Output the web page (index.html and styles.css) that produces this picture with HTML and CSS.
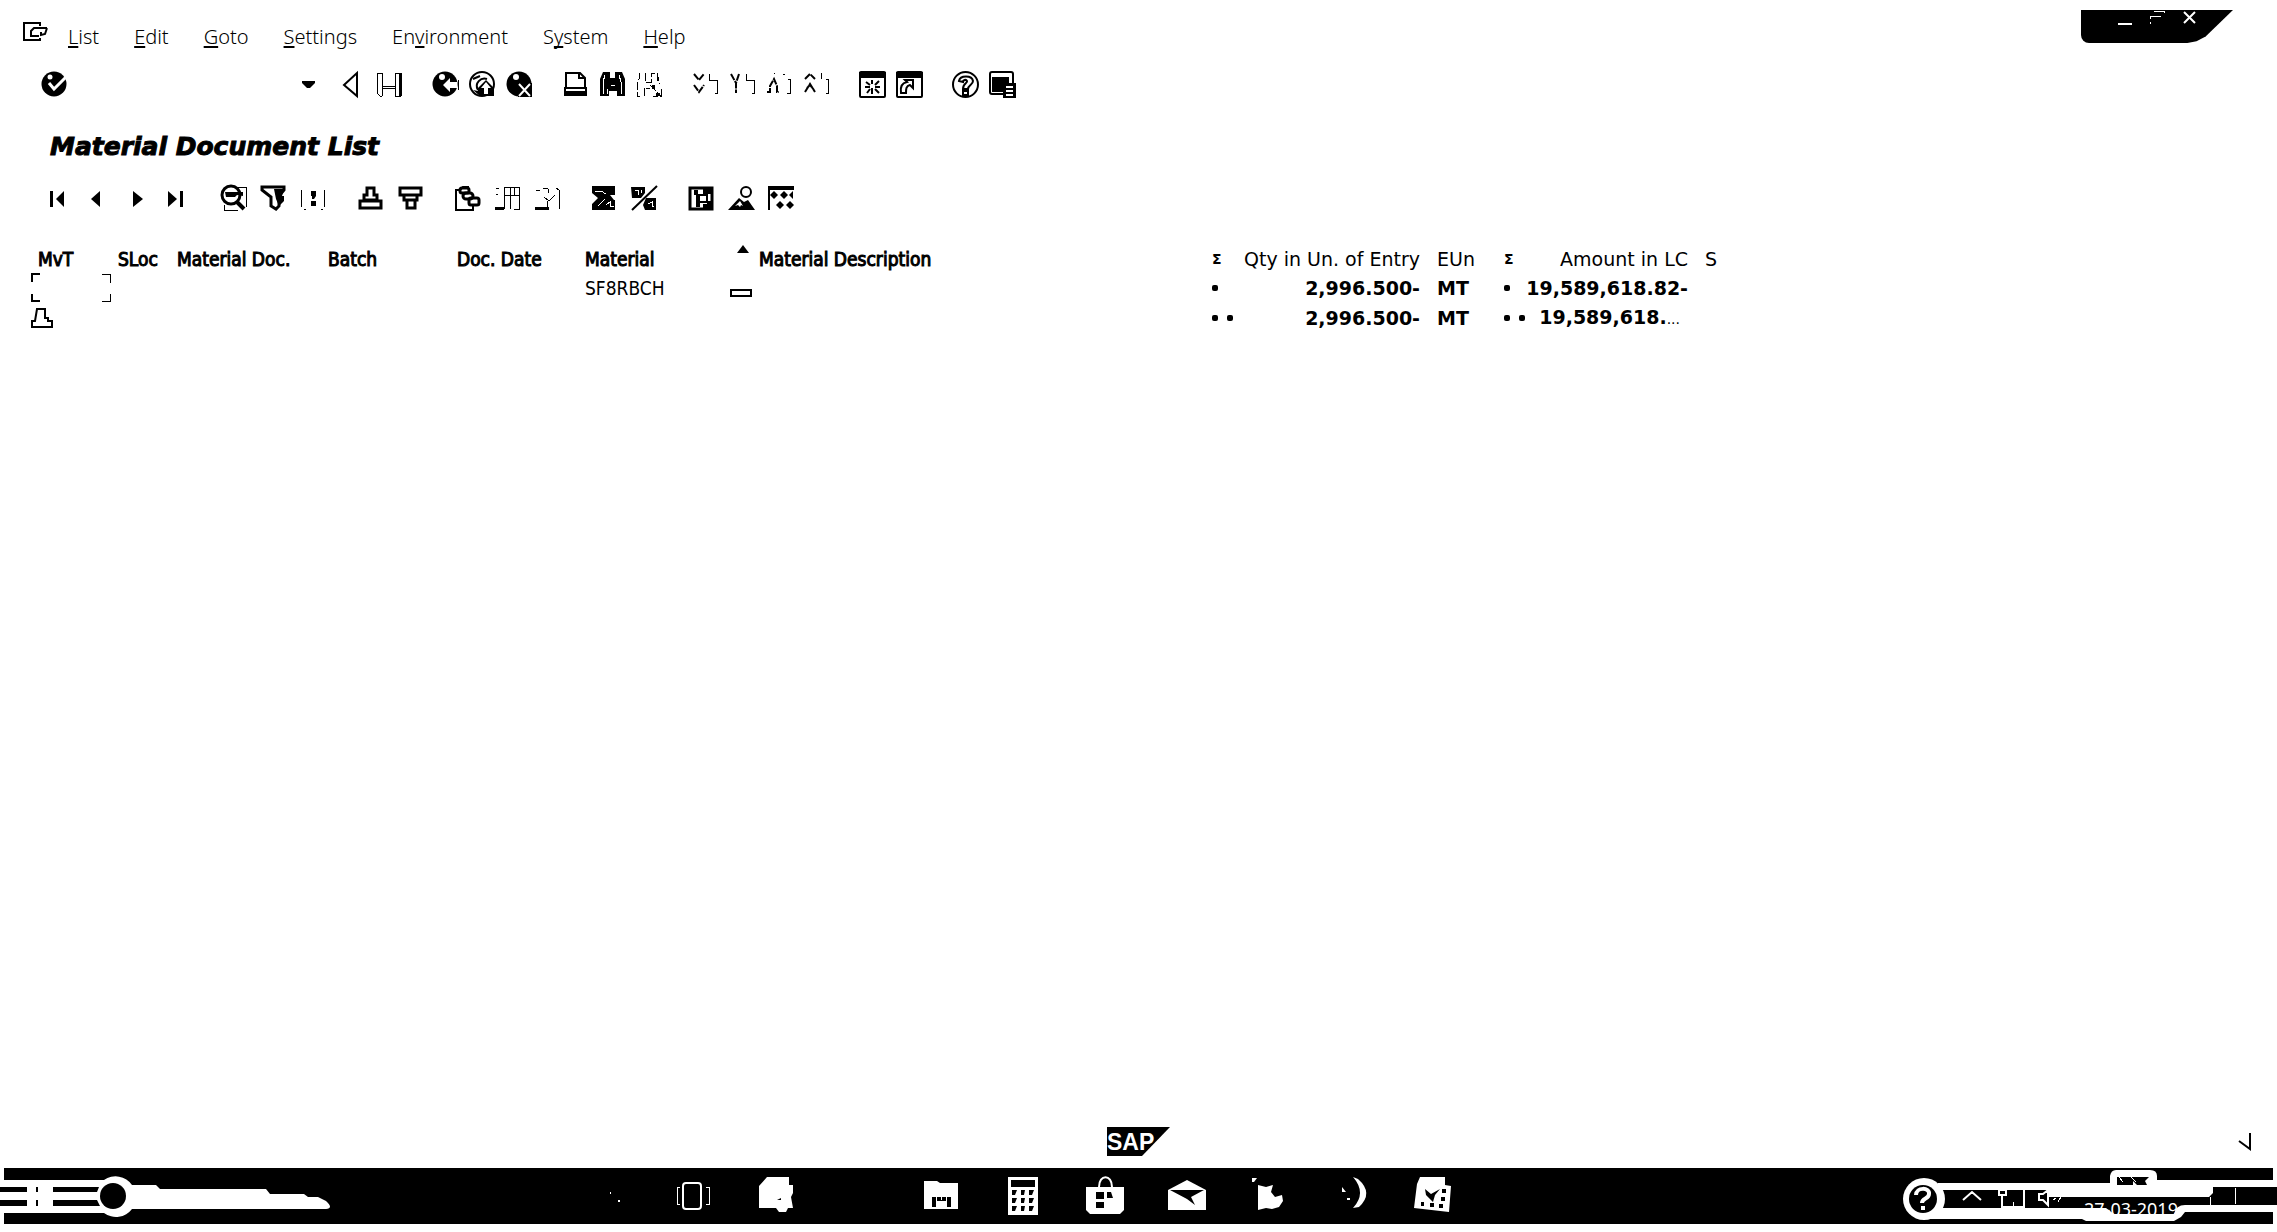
FILE: index.html
```html
<!DOCTYPE html>
<html lang="en">
<head>
<meta charset="utf-8">
<title>Material Document List</title>
<link rel="stylesheet" href="styles.css">
</head>
<body>
<header class="top">
  <nav class="menu">
    <button class="icon" aria-label="Session"><svg viewBox="0 0 27 27"><path class="l" d="M20 7V4H4v17h16v-2M27 9H14l-3 3v5h8M27 9l-2 6-4 1v-3"/></svg></button>
    <a href="#"><u>L</u>ist</a>
    <a href="#"><u>E</u>dit</a>
    <a href="#"><u>G</u>oto</a>
    <a href="#"><u>S</u>ettings</a>
    <a href="#">En<u>v</u>ironment</a>
    <a href="#">S<u>y</u>stem</a>
    <a href="#"><u>H</u>elp</a>
  </nav>
  <div class="window-controls">
    <button aria-label="Minimize"><svg viewBox="0 0 16 16"><path class="w" d="M1 14h14"/></svg></button>
    <button aria-label="Restore"><svg viewBox="0 0 16 16"><path class="w thin" d="M1 14v-2M1 9V6h11M5 1h10v2"/></svg></button>
    <button aria-label="Close"><svg viewBox="0 0 16 16"><path class="w" d="M3 2l11 11M14 2L3 13"/></svg></button>
  </div>
</header>

<div class="toolbar system-bar">
  <div class="command">
    <button class="icon" aria-label="Enter"><svg viewBox="0 0 27 27"><circle cx="13" cy="13" r="12.5"/><circle class="wf" cx="9" cy="6" r="2.5"/><path class="w w3" d="M8 12l5 6L25 6"/></svg></button>
    <input type="text" aria-label="Command">
    <button class="icon" aria-label="Command history"><svg viewBox="0 0 27 27"><path d="M7 10h13v2l-5 5h-3l-5-5z"/></svg></button>
  </div>
  <div class="groups">
    <div class="group">
      <button class="icon" aria-label="Hide command field"><svg viewBox="0 0 27 27"><path class="l" d="M18 2v23L5 14z"/></svg></button>
      <button class="icon" aria-label="Save"><svg viewBox="0 0 27 27"><path class="l thin" d="M6 2H1v20l3 3h2M6 2v23M6 15h13M6 17h13M19 2v23M19 2h5v23h-5"/><path d="M23 2h3v23h-3z"/></svg></button>
    </div>
    <div class="group">
      <button class="icon" aria-label="Back"><svg viewBox="0 0 27 27"><circle cx="13" cy="13" r="12.5"/><circle class="wf" cx="10" cy="6" r="3"/><path class="wf" d="M11 14l7-7v4h7v6h-7v4z"/><path class="l thin" d="M26 9v10"/></svg></button>
      <button class="icon" aria-label="Exit"><svg viewBox="0 0 27 27"><circle class="l" cx="13" cy="13" r="12"/><path class="l" d="M9 19c-4-7 3-13 9-11M4 8l7-3"/><path d="M4 19l5 1v-3l8-8 8 8v8H11z"/><path class="wf" d="M17 11l5 6h-3v6h-4v-6h-3z"/></svg></button>
      <button class="icon" aria-label="Cancel"><svg viewBox="0 0 27 27"><circle cx="13" cy="13" r="12.500"/><path d="M12 12h14v14H12z"/><circle class="wf" cx="10" cy="6" r="3"/><path class="w" d="M13 13l11 12M24 13L13 25"/></svg></button>
    </div>
    <div class="group">
      <button class="icon" aria-label="Print"><svg viewBox="0 0 27 27"><path class="l" d="M4 16V2h14l5 5v9M17 2v5h5M3 17h21v5H3z"/><path d="M2 20h23v5H2z"/></svg></button>
      <button class="icon" aria-label="Find"><svg viewBox="0 0 27 27"><path d="M1 25V8l3-7h7v6h5V1h7l3 7v17h-8v-5h-8v5z"/><path class="w thin" d="M4 23V11l2-7M8 23v-5M22 23V11l-2-7M12 14h4"/></svg></button>
      <button class="icon" aria-label="Find next"><svg viewBox="0 0 27 27"><path class="l thin" d="M3 2v6L1 10v15h3M9 2v9h6V2h6v7l3 4M8 25v-8h6M14 14l11 11M25 18v7h-8M21 2l2 8" stroke-dasharray="8 2"/><path d="M16 14h3v4h-3zM20 22h4v3h-4z"/></svg></button>
    </div>
    <div class="group">
      <button class="icon" aria-label="First page"><svg viewBox="0 0 27 27"><path class="l" d="M2 3l5 6 5-6M2 14l5 7 5-7" stroke-dasharray="7 1"/><path class="l thin" d="M17 3v6h8v13h-2"/></svg></button>
      <button class="icon" aria-label="Previous page"><svg viewBox="0 0 27 27"><path class="l" d="M2 3l5 9M10 3l-3 9v10" stroke-dasharray="7 1"/><path class="l thin" d="M17 3v6h8v13h-2"/></svg></button>
      <button class="icon" aria-label="Next page"><svg viewBox="0 0 27 27"><path class="l" d="M1 21h3v-6l4-7 3 7v6h2" stroke-dasharray="7 1"/><path class="l thin" d="M8 2h1M17 3h2M22 8h2v14h-3"/></svg></button>
      <button class="icon" aria-label="Last page"><svg viewBox="0 0 27 27"><path class="l" d="M2 8l5-5 5 5M2 21l5-8 5 8M4 17l3-3 4 5" stroke-dasharray="7 1"/><path class="l thin" d="M18 2v6M23 8h2v14h-2"/></svg></button>
    </div>
    <div class="group">
      <button class="icon" aria-label="New session"><svg viewBox="0 0 27 27"><rect class="l" x="1" y="1" width="25" height="25" rx="1"/><path d="M0 1h27v6H0z"/><path class="l" d="M13 9v4M13 17v6M6 16h5M16 16h5M7 11l4 3M20 10l-4 4M8 22l3-4M20 22l-4-4"/></svg></button>
      <button class="icon" aria-label="Create shortcut"><svg viewBox="0 0 27 27"><rect class="l" x="1" y="1" width="25" height="25" rx="1"/><path d="M0 1h27v6H0z"/><path class="l" d="M5 22c-1-6 1-10 6-11L9 9h8v8l-3-3c-4 1-4 4-4 8z"/></svg></button>
    </div>
    <div class="group">
      <button class="icon" aria-label="Help"><svg viewBox="0 0 27 27"><circle class="l" cx="13.500" cy="13.500" r="12.500"/><path class="l" d="M7 10c1-6 13-6 14 0 0 4-5 4-5 8h-5c0-6 5-6 4-8-1-2-4-1-4 1zM11 20h5v4h-5z"/></svg></button>
      <button class="icon" aria-label="Customize layout"><svg viewBox="0 0 27 27"><rect class="l" x="1" y="1" width="23" height="22" rx="2"/><path d="M5 6h15v9h-5v6H3V6zM14 12h13v15H14z"/><path class="w" d="M17 16h7M17 20h7M17 24h7"/></svg></button>
    </div>
  </div>
</div>

<h1>Material Document List</h1>

<div class="toolbar list-bar">
  <div class="group">
    <button class="icon" aria-label="First column"><svg viewBox="0 0 27 27"><path d="M7 6h3v16H7zM21 6v16l-8-8z"/></svg></button>
    <button class="icon" aria-label="Previous column"><svg viewBox="0 0 27 27"><path d="M17 6v16l-9-8z"/></svg></button>
    <button class="icon" aria-label="Next column"><svg viewBox="0 0 27 27"><path d="M10 6v16l10-8z"/></svg></button>
    <button class="icon" aria-label="Last column"><svg viewBox="0 0 27 27"><path d="M5 6v16l9-8zM17 6h3v16h-3z"/></svg></button>
  </div>
  <div class="group">
    <button class="icon" aria-label="Details"><svg viewBox="0 0 27 27"><path class="l thin" d="M18 2h8v20M4 20v5h14"/><circle class="l w3" cx="11" cy="10" r="9"/><path class="l w4" d="M17 17l7 7"/><path d="M5 7h18v4l-6-1-2 2H6z"/></svg></button>
    <button class="icon" aria-label="Filter"><svg viewBox="0 0 27 27"><path class="l w3" d="M2 2h22v3l-5 6v10l-3 3-5-3v-9L2 5z"/><path d="M14 4h10l-2 7h2v5l-5 5-3-7z"/></svg></button>
    <button class="icon" aria-label="Choose columns"><svg viewBox="0 0 27 27"><path class="l thin" d="M1 5v17M24 5v17M4 24h2M21 24h2"/><path d="M11 6h5v5l-2 3h-2v-3h-1zM11 16h5v5h-5z"/></svg></button>
  </div>
  <div class="group">
    <button class="icon" aria-label="Sort ascending"><svg viewBox="0 0 27 27"><path class="l w3" d="M10 3h7v7h3v5H7v-5h3zM3 16h21v7H3z"/></svg></button>
    <button class="icon" aria-label="Sort descending"><svg viewBox="0 0 27 27"><path class="l w3" d="M3 3h21v7H3zM7 10h13v5H7zM10 15h8v8h-8z"/></svg></button>
  </div>
  <div class="group">
    <button class="icon" aria-label="Views"><svg viewBox="0 0 27 27"><path class="l" d="M6 5H2v20h17v-4M6 5l3-3h6"/><rect class="l w3" x="6" y="3" width="9" height="5" rx="2"/><rect class="l w3" x="9" y="8" width="10" height="6" rx="3"/><rect class="l w3" x="15" y="13" width="10" height="7" rx="2"/></svg></button>
    <button class="icon" aria-label="Export"><svg viewBox="0 0 27 27"><path class="l thin" d="M10 2h15v22h-5M16 2v22M10 10h15M10 2v22M2 3h3M2 9h2M20 2v8"/><path d="M1 22h9v3H1z"/></svg></button>
    <button class="icon" aria-label="Layout"><svg viewBox="0 0 27 27"><path class="l thin" d="M2 5h4M9 3h5M14 4v4M10 12l5 4 6-6M13 16v7M22 3l3 2v19"/><path d="M1 22h14v3H1z"/></svg></button>
  </div>
  <div class="group">
    <button class="icon" aria-label="Total"><svg viewBox="0 0 27 27"><path d="M1 1h23v9h-5l4 5h1v10H1v-6l6-6-6-5z"/><path class="w thin" d="M4 6h6l5 3M7 21l7-7M15 20l4-3v4h4"/></svg></button>
    <button class="icon" aria-label="Subtotal"><svg viewBox="0 0 27 27"><path class="l" d="M1 25L26 1"/><path d="M0 2h14v6l-4 5H1zM15 13h10v12H14l-2-5z"/><path class="w thin" d="M4 5h3v5M10 5v3M17 19l4-2v4h2"/></svg></button>
  </div>
  <div class="group">
    <button class="icon" aria-label="Document"><svg viewBox="0 0 27 27"><rect class="l w3" x="2" y="3" width="22" height="21"/><path d="M6 5h4v5H6zM8 10h4v12H8zM15 4h8v5h-8zM19 16h4v7h-8v-4h4z"/><rect class="l" x="11" y="10" width="8" height="7"/></svg></button>
    <button class="icon" aria-label="Graphic"><svg viewBox="0 0 27 27"><circle class="l" cx="18" cy="7" r="5"/><path d="M0 25l11-12 5 4 4-2 7 10z"/><path class="wf" d="M7 21l5-5 3 5-2-1-1 2-2-2z"/></svg></button>
    <button class="icon" aria-label="Selections"><svg viewBox="0 0 27 27"><path class="l" d="M1 25V2h25"/><path d="M1 1h25v4H1zM6 6l4 4-4 4-4-4zM16 6l4 4-4 4-4-4zM25 6v8l-4-4zM12 16l4 4-4 4-4-4zM22 16l4 4-4 4-4-4z"/></svg></button>
  </div>
</div>

<main>
  <table>
    <colgroup><col class="c-mvt"><col class="c-sloc"><col class="c-doc"><col class="c-batch"><col class="c-date"><col class="c-mat"><col class="c-desc"><col class="c-qty"><col class="c-eun"><col class="c-amt"><col class="c-s"></colgroup>
    <thead>
      <tr><th>MvT</th><th>SLoc</th><th>Material Doc.</th><th>Batch</th><th>Doc. Date</th><th><div class="split">Material<svg class="sort" viewBox="0 0 12 8"><path d="M6 0l6 8H0z"/></svg></div></th><th>Material Description</th><th class="r"><div class="split"><b class="sigma">Σ</b>Qty in Un. of Entry</div></th><th class="r">EUn</th><th class="r"><div class="split"><b class="sigma">Σ</b>Amount in LC</div></th><th class="r">S</th></tr>
    </thead>
    <tbody>
      <tr><td class="focus"><svg viewBox="0 0 80 30"><path class="l" d="M9 1H1v8M1 21v7h8"/><path class="l thin" d="M71 1h8v9M79 21v7h-8"/></svg></td><td></td><td></td><td></td><td></td><td><div class="split">SF8RBCH<svg class="box" viewBox="0 0 22 8"><rect class="l" x="1" y="1" width="20" height="6"/></svg></div></td><td></td><td class="n"><div class="split"><i class="dots"><i></i></i>2,996.500-</div></td><td class="n">MT</td><td class="n"><div class="split"><i class="dots"><i></i></i>19,589,618.82-</div></td><td></td></tr>
      <tr><td class="total"><svg viewBox="0 0 22 20"><path class="l" d="M6 1h8v9h3v3h4v6H1v-6h3z"/></svg></td><td></td><td></td><td></td><td></td><td></td><td></td><td class="n"><div class="split"><i class="dots"><i></i><i></i></i>2,996.500-</div></td><td class="n">MT</td><td class="n"><div class="split"><i class="dots"><i></i><i></i></i><span class="cut">19,589,618.<small>...</small></span></div></td><td></td></tr>
    </tbody>
  </table>
</main>

<footer class="status">
  <svg class="sap" viewBox="0 0 63 29"><path d="M0 0h63L35 29H0z"/><text x="0" y="23">SAP</text></svg>
  <svg class="corner" viewBox="0 0 14 18"><path class="l" d="M12 0v16L1 8"/></svg>
</footer>

<nav class="taskbar">
  <svg class="left" viewBox="0 0 340 56"><path class="wf" d="M0 0h4v12h100a20 20 0 0 1 28 5h24l4 4h106l4 5h34l4 3h10l8 4q8 7 0 8H132a20 20 0 0 1-28 4H4v11H0z"/><path d="M0 19h27v5H0zM36 19h2v5h-2zM53 19h46l-2 5H53zM0 32h27v6H0zM36 32h2v6h-2zM53 32h44l3 6H53z"/><circle cx="113" cy="28" r="13"/></svg>
  <div class="apps">
    <button aria-label="Search"><svg viewBox="0 0 40 40"><path class="wf" d="M17 16h1v2h-1zM25 24h2v2h-2z"/></svg></button>
    <button aria-label="Task view"><svg viewBox="0 0 40 40"><path class="w thin" d="M5 11H2v17h3M31 11h3v17h-3"/><rect class="w" x="8" y="7" width="18" height="26" rx="3"/></svg></button>
    <button aria-label="Notes"><svg viewBox="0 0 40 40"><path class="wf" d="M10 1h22v8h4v8l-2 4 2 11h-5l-2 4h-7l-3-4H2V10z"/><path d="M20 24l4-2v2z"/></svg></button>
    <button aria-label="Browser"></button>
    <button aria-label="File explorer"><svg viewBox="0 0 40 40"><path class="wf" d="M3 5h13l3 2h18v26H3z"/><path d="M11 21h19v10h-4v-6H15v6h-4z"/><path class="w thin" d="M15 21v4M20 21v3M25 21v4"/></svg></button>
    <button aria-label="Calculator"><svg viewBox="0 0 40 40"><path class="wf" d="M5 1h30v38H5z"/><path d="M8 4h24v7H8zM9 14h5l-2 5H9zM18 14h4l-1 5h-3zM26 14h5l-2 5h-3zM9 22h5l-2 5H9zM18 22h4l-1 5h-3zM26 22h5l-2 5h-3zM9 30h5l-2 5H9zM18 30h4l-1 5h-3zM26 30h5l-2 5h-3z"/></svg></button>
    <button aria-label="Store"><svg viewBox="0 0 40 40"><path class="wf" d="M1 11h38v23l-4 4H5l-4-4z"/><path class="w" d="M14 11c0-13 13-13 13 0"/><path d="M11 16h8v7h-8zM22 16h4l2 6h-6zM11 26h8v6h-8z"/></svg></button>
    <button aria-label="Mail"><svg viewBox="0 0 40 40"><path class="wf" d="M1 14L20 4l19 10v20H1z"/><path d="M3 14h34L24 21l4 8-8-6z"/></svg></button>
    <button aria-label="Media"><svg viewBox="0 0 40 40"><path class="wf" d="M3 2h5L5 6H3zM9 9l8 2 7-2-2 7 4 5 7-2 1 6-4 6-7 2-6-1-8 2z"/></svg></button>
    <button aria-label="Call"><svg viewBox="0 0 40 40"><path class="wf" d="M22 1q14 16 0 31l6-1q15-14-1-28zM11 11l4 5h-4zM16 22h3v2h-3z"/></svg></button>
    <button aria-label="SAP Logon"><svg viewBox="0 0 40 40"><path class="wf" d="M7 1h25v8l6 1-2 26-35-4L4 8z"/><path d="M12 13l6 5 9-5-5 6-2 7-7-7zM8 26h3v4H8zM17 27h4v4h-4zM26 28h4v4h-4zM29 13h4v4h-4zM28 21h4v4h-4z"/></svg></button>
  </div>
  <svg class="tray" viewBox="0 0 381 56">
    <path class="w" d="M67 32l9-8 9 8M103 22h7v5h-7zM106 27v12h22V22M143 26h4l5-4v15l-5-5h-4z"/>
    <path class="w thin" d="M117 34v5M112 39h12M157 32l3-2M162 34l3-5M316 37h6M327 37h10M314 29v8M339 20v16"/>
    <text x="188" y="48">27-03-2019</text>
    <path class="wf" d="M42 15h172V8q1-6 6-6h34q7 0 7 6v4h120v7h-64v6l-4 4H153v-7H42zM28 40h182l8 6h60q2-9 11-9h92v7h-92l-4 5-7 4h-88l-4-2H28z"/>
    <path d="M221 9h32l-4 4 2 4h-10l-4-4v4h-16z"/><path class="w thin" d="M223 9l4 5M235 9l5 5"/>
    <circle class="wf" cx="28" cy="31" r="21"/>
    <circle cx="27" cy="31" r="14"/><path class="w w4" d="M20 27c0-8 14-8 13-1 0 5-7 4-7 9M27 38v4"/>
    <path class="wf" d="M377 0h4v12h-4zM377 44h4v12h-4z"/>
  </svg>
</nav>
</body>
</html>
```
FILE: styles.css
```css
* { box-sizing: border-box; }
body {
  margin: 0;
  min-height: 100vh;
  display: flex;
  flex-direction: column;
  background: #fff;
  color: #000;
  font: 19px/24px "DejaVu Sans Condensed", "DejaVu Sans", sans-serif;
}
svg { display: block; overflow: visible; }
button { border: 0; padding: 0; background: none; color: inherit; font: inherit; }
.l { fill: none; stroke: #000; stroke-width: 2; }
.w { fill: none; stroke: #fff; stroke-width: 2; }
.wf { fill: #fff; }
.thin { stroke-width: 1; shape-rendering: crispEdges; }
.w3 { stroke-width: 3; }
.w4 { stroke-width: 4; }
.icon { flex: none; width: 27px; height: 27px; }

.top { display: flex; justify-content: space-between; align-items: flex-start; height: 64px; }
.menu { display: flex; gap: 35px; padding: 25px 0 0 20px; font-family: "Noto Sans", sans-serif; font-size: 20px; font-weight: 300; }
.menu .icon { margin: -6px -14px 0 0; }
.menu a { color: inherit; text-decoration: none; }
.menu u { text-underline-offset: 2px; text-decoration-thickness: 2px; text-decoration-skip-ink: none; }
.window-controls {
  display: flex;
  gap: 16px;
  width: 152px;
  height: 33px;
  margin: 10px 44px 0 0;
  padding-left: 36px;
  background: #000;
  border-radius: 0 0 0 8px;
  clip-path: polygon(0 0, 100% 0, 82% 80%, 76% 95%, 70% 100%, 0 100%);
}
.window-controls button { width: 16px; height: 16px; }

.toolbar { display: flex; align-items: center; }
.group { display: flex; }
.system-bar { height: 40px; padding-left: 41px; }
.command { display: flex; width: 298px; }
.command input { width: 227px; border: 0; outline: 0; background: none; }
.groups { display: flex; gap: 29px; }
.groups .group { gap: 10px; }
h1 { margin: 24px 0 0 50px; font-family: "DejaVu Sans", sans-serif; font-size: 25px; line-height: 38px; font-style: italic; -webkit-text-stroke: 1px #000; }
.list-bar { gap: 30px; padding-left: 43px; margin-top: 19px; }
.list-bar .group { gap: 13px; }

main { flex: 1; padding: 33px 0 0 31px; }
table { table-layout: fixed; width: 1699px; border-collapse: collapse; }
th, td { padding: 0 7px; text-align: left; white-space: nowrap; font-weight: 400; }
th { height: 28px; -webkit-text-stroke: 1px #000; }
th.r { -webkit-text-stroke: 0; font-family: "DejaVu Sans", sans-serif; }
td { height: 30px; }
.c-mvt { width: 80px; }
.c-sloc { width: 59px; }
.c-doc { width: 151px; }
.c-batch { width: 129px; }
.c-date { width: 128px; }
.c-mat { width: 174px; }
.c-desc { width: 453px; }
.c-qty { width: 225px; }
.c-eun { width: 67px; }
.c-amt { width: 201px; }
.c-s { width: 32px; }
.split { display: flex; justify-content: space-between; align-items: center; }
.r .split, .n .split { padding-right: 3px; }
.sort { width: 12px; height: 8px; margin: -20px -4px 0 0; }
.box { width: 22px; height: 8px; margin: 10px -7px 0 0; }
.sigma { font-size: 14px; }
td.focus, td.total { padding: 0; }
.focus svg { width: 80px; height: 30px; }
.total svg { width: 22px; height: 20px; }
.n { font-family: "DejaVu Sans", sans-serif; font-weight: 700; }
.dots { display: flex; gap: 9px; }
.dots i { width: 6px; height: 6px; background: #000; border-radius: 2px; }
.cut { padding-right: 8px; }
.cut small { font-size: 14px; font-weight: 400; }

.status { display: grid; grid-template-columns: 1fr 63px 1fr; align-items: center; height: 53px; }
.sap { grid-column: 2; width: 63px; height: 29px; }
.sap text { fill: #fff; font: 700 23px "Liberation Sans", sans-serif; }
.corner { justify-self: end; width: 14px; height: 18px; margin-right: 25px; }

.taskbar { display: flex; height: 56px; margin-bottom: 8px; background: #000; }
.left { flex: none; width: 340px; height: 56px; }
.apps { display: flex; align-items: center; gap: 42px; margin-left: 253px; }
.apps button { width: 40px; height: 40px; }
.tray { flex: none; width: 381px; height: 56px; margin-left: auto; }
.tray text { fill: #fff; font: 18px "Noto Sans", sans-serif; }
```
